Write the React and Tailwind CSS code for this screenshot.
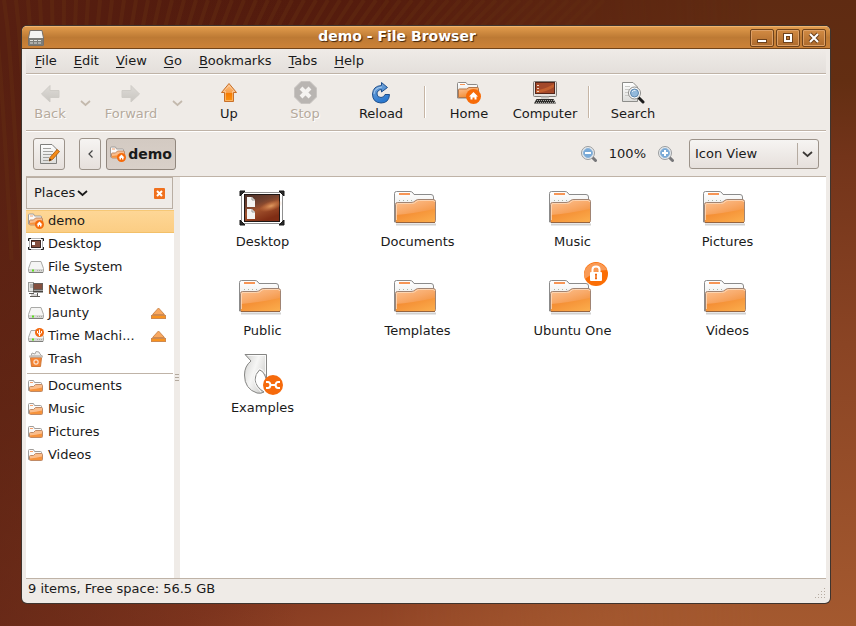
import React from "react";

const STRIPES = Array.from({ length: 52 }, (_, i) => {
  const x = -8 + i * 12;
  const lean = Math.min(26, -4 + i * 0.7);
  return `M${x} 0 L${x - lean} 26 Q${x - lean * 2.4} 70 ${x - lean * 2.4 + 10} 260`;
});

function Wallpaper() {
  return (
    <svg
      className="absolute inset-0 h-full w-full"
      viewBox="0 0 856 626"
      preserveAspectRatio="none"
      aria-hidden="true"
    >
      <defs>
        <linearGradient id="sky" x1="0.2" y1="0" x2="0.7" y2="1">
          <stop offset="0" stopColor="#50190c" />
          <stop offset="0.45" stopColor="#672814" />
          <stop offset="0.8" stopColor="#843820" />
          <stop offset="1" stopColor="#a2552e" />
        </linearGradient>
        <linearGradient id="shade" x1="0" y1="0" x2="1" y2="0">
          <stop offset="0" stopColor="#5c2314" stopOpacity="0.6" />
          <stop offset="0.35" stopColor="#5c2314" stopOpacity="0" />
        </linearGradient>
        <linearGradient id="rightGlow" x1="0" y1="0" x2="0" y2="1">
          <stop offset="0" stopColor="#5f2b12" />
          <stop offset="0.13" stopColor="#632e12" />
          <stop offset="0.25" stopColor="#73341a" />
          <stop offset="0.55" stopColor="#8a4424" />
          <stop offset="1" stopColor="#a4592f" />
        </linearGradient>
        <linearGradient id="fadeIn" x1="0" y1="0" x2="1" y2="0">
          <stop offset="0" stopColor="#000" />
          <stop offset="0.8" stopColor="#fff" />
        </linearGradient>
        <mask id="rightMask">
          <rect x="380" width="476" height="626" fill="url(#fadeIn)" />
        </mask>
        <linearGradient id="paper" x1="0" y1="0" x2="0" y2="1">
          <stop offset="0" stopColor="#ffffff" />
          <stop offset="1" stopColor="#dcdcda" />
        </linearGradient>
        <linearGradient id="folder" x1="0" y1="0" x2="0.5" y2="1">
          <stop offset="0" stopColor="#fcc497" />
          <stop offset="0.5" stopColor="#f8a866" />
          <stop offset="1" stopColor="#f28a2c" />
        </linearGradient>
        <linearGradient id="folderLow" x1="0" y1="0" x2="1" y2="1">
          <stop offset="0" stopColor="#f2822b" />
          <stop offset="1" stopColor="#fbae4d" />
        </linearGradient>
        <linearGradient id="arrow" x1="0" y1="0" x2="0" y2="1">
          <stop offset="0" stopColor="#fbc08a" />
          <stop offset="0.5" stopColor="#f8a04a" />
          <stop offset="0.52" stopColor="#f57900" />
          <stop offset="1" stopColor="#fc9312" />
        </linearGradient>
        <linearGradient id="grayArrow" x1="0" y1="0" x2="0" y2="1">
          <stop offset="0" stopColor="#dddad6" />
          <stop offset="1" stopColor="#c9c6c1" />
        </linearGradient>
        <linearGradient id="blue" x1="0" y1="0" x2="0.4" y2="1">
          <stop offset="0" stopColor="#86b0dc" />
          <stop offset="1" stopColor="#2a78cf" />
        </linearGradient>
        <linearGradient id="nebula" x1="0" y1="0" x2="0.5" y2="1">
          <stop offset="0" stopColor="#4b3029" />
          <stop offset="0.4" stopColor="#74422f" />
          <stop offset="0.6" stopColor="#a2532e" />
          <stop offset="1" stopColor="#7f2d14" />
        </linearGradient>
        <radialGradient id="nebulaGlow">
          <stop offset="0" stopColor="#f0ae6e" stopOpacity="0.8" />
          <stop offset="1" stopColor="#d8814a" stopOpacity="0" />
        </radialGradient>
        <linearGradient id="curl" x1="0" y1="0" x2="1" y2="0.6">
          <stop offset="0" stopColor="#cfcfcd" />
          <stop offset="0.5" stopColor="#f6f6f5" />
          <stop offset="1" stopColor="#cfcfcd" />
        </linearGradient>
      </defs>
      <rect width="856" height="626" fill="url(#sky)" />
      <rect width="856" height="626" fill="url(#shade)" />
      <g fill="none" stroke="#642e12" strokeWidth="4" opacity="0.45">
        {STRIPES.map((d) => (
          <path key={d} d={d} />
        ))}
      </g>
      <rect x="380" width="476" height="626" fill="url(#rightGlow)" mask="url(#rightMask)" />
    </svg>
  );
}

function Icon({ size = 24, className = "", children, box = size }) {
  return (
    <svg
      width={size}
      height={size}
      viewBox={`0 0 ${box} ${box}`}
      className={`shrink-0 ${className}`}
      aria-hidden="true"
    >
      {children}
    </svg>
  );
}

function FolderLarge() {
  return (
    <g transform="translate(-1 0)">
      <path d="M3 41.500H43" stroke="#000" strokeOpacity="0.18" strokeWidth="2" />
      <path
        d="M1.500 39V10.500Q1.500 8.500 3.500 8.500H17Q19 8.500 20 10L21 11.500H38Q40.500 11.500 40.500 14V39Z"
        fill="url(#paper)"
        stroke="#8b8b8b"
      />
      <path d="M6 11H17" stroke="#f79555" strokeWidth="2" />
      <path d="M6 17.500H22" stroke="#a7b3a6" strokeDasharray="1 3" />
      <path
        d="M2.500 38V21.500Q2.500 19.500 4.500 19.500H18Q20.500 19.500 22 18L22.500 17.500Q24 16.500 26 16.500H40Q42.500 16.500 42.500 18.500V37.500Q42.500 39.500 40.500 39.500H4Q2.500 39.500 2.500 38Z"
        fill="url(#folder)"
        stroke="#a08473"
      />
      <path d="M3 32Q18 31 42 26V38Q42 39 40.500 39H4Q3 39 3 38Z" fill="url(#folderLow)" />
      <path d="M3.500 37V22Q3.500 20.500 5 20.500H18.500Q21.500 20.500 23 19L24 18Q25 17.500 26.500 17.500H40Q41.500 17.500 41.500 19" fill="none" stroke="#fddcbe" strokeOpacity="0.8" />
      <path d="M3 39.500H42" stroke="#96643f" />
    </g>
  );
}

function FolderSmall() {
  return (
    <g>
      <path d="M.5 12.500V3.500Q.5 2.500 1.500 2.500H5.500L6.500 4.500H12.500Q13.500 4.500 13.500 5.500V12.500Z" fill="#fbfaf9" stroke="#a09d9a" />
      <path d="M2 4.500H5" stroke="#f7a06a" />
      <path d="M1.500 12V9.500Q1.500 8.500 2.500 8.500H5.500L7.500 6.500H13.500Q14.500 6.500 14.500 7.500V12.500Q14.500 13.500 13.500 13.500H2.500Q1.500 13.500 1.500 12.500Z" fill="#fabd8b" stroke="#bf8a66" />
      <path d="M2 11.500Q8 11 14 9.500V13H2Z" fill="#f6933c" />
    </g>
  );
}

function HomeSmall() {
  return (
    <g>
      <g transform="translate(0 -1.500)">
        <FolderSmall />
      </g>
      <circle cx="11.500" cy="11.500" r="4.500" fill="#f66a0a" />
      <path d="M11.500 8.500L14.500 11.500H13.500V13.500H9.500V11.500H8.500Z" fill="#fff" />
      <rect x="11" y="12" width="1" height="2" fill="#f66a0a" />
    </g>
  );
}

function DriveSmall() {
  return (
    <g>
      <path d="M3 2.500H13L15.500 9.500V12.500Q15.500 13.500 14.500 13.500H1.500Q.5 13.500 .5 12.500V9.500Z" fill="#f5f5f4" stroke="#a9a9a6" />
      <path d="M1 10H15V13H1Z" fill="#d6d6d3" />
      <path d="M1 13.500H15" stroke="#7f7f7c" />
      <path d="M4 11.500H6" stroke="#5be01a" strokeWidth="2" />
      <path d="M9 11.500H14" stroke="#aaaaa7" strokeDasharray="1 1" />
    </g>
  );
}

function DesktopSmall() {
  return (
    <g>
      <rect x="1.500" y="2.500" width="13" height="11" fill="#fff" stroke="#b4b4b4" />
      <rect x="3.500" y="4.500" width="9" height="7" fill="#85503f" stroke="#3a2723" />
      <rect x="4" y="6" width="3" height="3" fill="#fff" />
      <path d="M.5 5V2.500H3M15.500 5V2.500H13M.5 11V13.500H3M15.500 11V13.500H13" fill="none" stroke="#1e1e1e" />
    </g>
  );
}

function NetworkSmall() {
  return (
    <g>
      <rect x=".5" y=".5" width="5" height="9" fill="#e4e4e1" stroke="#9b9b98" />
      <path d="M2 3H5M2 5H5" stroke="#8b8b88" />
      <rect x="5.500" y="1.500" width="9" height="6" fill="#84503f" stroke="#66605c" />
      <path d="M5 9.500H15" stroke="#494642" strokeWidth="2" />
      <path d="M1 11.500H6M9.500 11V14M2 14.500H12" stroke="#5f5c58" />
      <path d="M3 13H9" stroke="#a5a29e" />
    </g>
  );
}

function UsbDriveSmall() {
  return (
    <g>
      <DriveSmall />
      <circle cx="11.500" cy="4.500" r="4.500" fill="#f2690f" />
      <path d="M11.500 1.500V8M9.500 3V5L11.500 6.500L13.500 5V3" fill="none" stroke="#fff" />
    </g>
  );
}

function TrashSmall() {
  return (
    <g>
      <path d="M3 5L4 2L7 3L8 .5L11 1L12 3L14 5Z" fill="#f0efed" stroke="#aaa7a4" />
      <path d="M2.500 6.500H13.500L12.500 15.500H3.500Z" fill="#f58433" stroke="#cf7838" />
      <path d="M1 5.500H15" stroke="#c5c1bc" strokeWidth="2" />
      <rect x="6" y="9" width="4" height="4" rx="1" fill="none" stroke="#fff" />
    </g>
  );
}

const MENUS = ["File", "Edit", "View", "Go", "Bookmarks", "Tabs", "Help"];

function MenuBar() {
  return (
    <nav className="flex h-[25px] shrink-0 items-center gap-[17px] border-b border-[#bfb3a7] bg-linear-to-b from-[#efebe7] to-[#e4dfdb] px-[9px]">
      {MENUS.map((m) => (
        <button key={m} type="button">
          <span className="underline decoration-1 underline-offset-2">{m[0]}</span>
          {m.slice(1)}
        </button>
      ))}
    </nav>
  );
}

function ToolButton({ label, width = "w-[76px]", disabled = false, children }) {
  return (
    <button
      type="button"
      disabled={disabled}
      className={`flex shrink-0 flex-col items-center ${width} ${disabled ? "text-[#b5aa9d] [text-shadow:1px_1px_0_#fff]" : ""}`}
    >
      <Icon size={24}>{children}</Icon>
      <span className="leading-[18px]">{label}</span>
    </button>
  );
}

function Chevron({ className = "" }) {
  return (
    <svg width="11" height="7" viewBox="0 0 11 7" className={className} aria-hidden="true">
      <path d="M1 1L5.500 5L10 1" fill="none" stroke="currentColor" strokeWidth="1.700" />
    </svg>
  );
}

function HistoryButton({ label }) {
  return (
    <button type="button" disabled aria-label={label} className="flex w-[22px] justify-center pt-1 text-[#c3b9ad]">
      <Chevron />
    </button>
  );
}

const Separator = () => <div className="mx-[5px] h-8 w-0.5 border-r border-l border-l-[#c6b5a5] border-r-white" />;

function Toolbar() {
  return (
    <div className="flex h-[57px] shrink-0 items-center border-t border-b border-t-white border-b-[#bfb3a7] pb-0.5">
      <ToolButton label="Back" width="w-12" disabled>
        <path d="M12 4.500V9.500H21V16.500H12V21L3.500 13Z" fill="url(#grayArrow)" stroke="#cfccc7" />
      </ToolButton>
      <HistoryButton label="Back history" />
      <ToolButton label="Forward" width="w-[70px]" disabled>
        <path d="M12 4.500V9.500H3V16.500H12V21L20.500 13Z" fill="url(#grayArrow)" stroke="#cfccc7" />
      </ToolButton>
      <HistoryButton label="Forward history" />
      <div className="ml-[3px] flex items-center">
        <ToolButton label="Up">
          <path d="M12 2.500L19.500 11.500H16.500V20.500H7.500V11.500H4.500Z" fill="url(#arrow)" stroke="#c8702a" />
          <path d="M12 4.500L17.500 10.500H15.500V19.500H8.500V10.500H6.500Z" fill="none" stroke="#fff" strokeOpacity="0.35" />
        </ToolButton>
        <ToolButton label="Stop" disabled>
          <path d="M8 .5H17L23.500 7V16L17 22.500H8L1.500 16V7Z" fill="#b9b5b2" stroke="#c9c5c2" />
          <path d="M8 7L17 16M17 7L8 16" stroke="#f5f3f1" strokeWidth="4" />
        </ToolButton>
        <ToolButton label="Reload">
          <path
            d="M12.500 1.500L18.500 6.500L12.500 11V8.500Q8 9 8 13Q8 16.500 12 16.500Q15 16.500 16 13.500H20.500Q20 22 12 22Q3.500 21.500 3.500 13Q4 5 12.500 4.500Z"
            fill="url(#blue)"
            stroke="#1f4f8c"
          />
          <path d="M5 13Q5 7 13 6" fill="none" stroke="#c4dbf2" strokeOpacity="0.7" />
        </ToolButton>
        <Separator />
        <ToolButton label="Home">
          <path d="M.5 17V2.500Q.5 1.500 1.500 1.500H9L10.500 3.500H19.500Q20.500 3.500 20.500 4.500V17Z" fill="url(#paper)" stroke="#8c8986" />
          <path d="M3 3.500H8" stroke="#f79555" />
          <path d="M1.500 16.500V9Q1.500 8 2.500 8H9.500L12 6.500H20.500Q21.500 6.500 21.500 7.500V16.500Z" fill="url(#folder)" stroke="#b3764b" />
          <circle cx="16.500" cy="15.500" r="7.500" fill="#f76b08" />
          <path d="M16.500 11L21 15.500H19.500V18.500H17.500V16.500H15.500V18.500H13.500V15.500H12Z" fill="#fff" />
        </ToolButton>
        <ToolButton label="Computer">
          <rect x=".5" y=".5" width="23" height="15" rx="1" fill="#e4e2df" stroke="#7e7b77" />
          <rect x="2.500" y="1.500" width="19" height="11" fill="#a4492a" stroke="#54251a" />
          <path d="M3 9Q10 9 21 3V6Q14 11 3 12Z" fill="#c4602f" />
          <path d="M4 4.500H6M4 7.500H6M4 10.500H6" stroke="#f3d5c6" />
          <path d="M8 16.500H16" stroke="#c2c0bc" strokeWidth="2" />
          <path d="M3.500 18H20.500L23 22.500H1Z" fill="#302f2d" />
          <path d="M4 19.500H21M3 21.500H22" stroke="#a9a7a4" strokeDasharray="1 1" />
        </ToolButton>
        <Separator />
        <ToolButton label="Search">
          <path d="M1.500 1.500H12L16.500 6V20.500H1.500Z" fill="url(#paper)" stroke="#8d8d8a" />
          <path d="M4 5.500H9M4 8.500H8M4 11.500H7M4 14.500H8" stroke="#c9c9c6" />
          <path d="M17 16L22 21" stroke="#1d1d1d" strokeWidth="3" strokeLinecap="round" />
          <circle cx="13.500" cy="12" r="6" fill="#fff" stroke="#8a8a88" />
          <circle cx="13.500" cy="12" r="4" fill="#92b9dc" stroke="#5e87ad" />
          <path d="M11 11Q12 9 14.500 9.500" stroke="#e5f0fa" fill="none" />
        </ToolButton>
      </div>
    </div>
  );
}

function ZoomIcon({ plus }) {
  return (
    <Icon size={16}>
      <path d="M11 11L14.500 14.500" stroke="#77777a" strokeWidth="3" strokeLinecap="round" />
      <circle cx="7" cy="7" r="6.500" fill="#e6eaee" stroke="#9a9c9e" />
      <circle cx="7" cy="7" r="4.500" fill="#79a9d6" stroke="#8db4da" />
      <path d={plus ? "M4 7H10M7 4V10" : "M4 7H10"} stroke="#fff" strokeWidth="2" />
    </Icon>
  );
}

const raised = "rounded-[3px] border border-[#9c938a] bg-linear-to-b from-[#f6f4f2] to-[#e6e0dc]";

function LocationBar() {
  return (
    <div className="flex h-[46px] shrink-0 items-center border-t border-b border-t-white border-b-[#bfb3a7] px-[7px]">
      <button type="button" aria-label="Edit location" className={`flex h-8 w-8 items-center justify-center ${raised}`}>
        <Icon size={22}>
          <path d="M2.500 1.500H14L18.500 6V20.500H2.500Z" fill="url(#paper)" stroke="#7f7f7c" />
          <path d="M5 5.500H13M5 8.500H15M5 11.500H14M5 14.500H11M5 17.500H10" stroke="#a2a29f" />
          <path d="M11 18L12 14.500L19 6.500L21.500 8.500L14.500 16.500Z" fill="#f68b16" stroke="#b1651b" />
          <path d="M11 18L11.800 15.500L13.500 17Z" fill="#2c2c2c" />
        </Icon>
      </button>
      <button type="button" aria-label="Scroll path back" className={`ml-3.5 flex h-8 w-[22px] items-center justify-center ${raised}`}>
        <svg width="5" height="8" viewBox="0 0 5 8" aria-hidden="true">
          <path d="M4.500 .5L1 4L4.500 7.500" fill="none" stroke="#444" strokeWidth="1.200" />
        </svg>
      </button>
      <button
        type="button"
        className="ml-[5px] flex h-8 w-[70px] items-center justify-center gap-0.5 rounded-[3px] border border-[#91877e] bg-linear-to-b from-[#d3cac2] to-[#d9d0c9] text-sm font-bold"
      >
        <Icon size={16}>
          <HomeSmall />
        </Icon>
        demo
      </button>
      <div className="ml-auto flex items-center gap-3">
        <button type="button" aria-label="Zoom out">
          <ZoomIcon />
        </button>
        <span>100%</span>
        <button type="button" aria-label="Zoom in">
          <ZoomIcon plus />
        </button>
      </div>
      <div className="relative ml-[15px]">
        <select
          aria-label="View mode"
          defaultValue="icon"
          className={`block h-[30px] w-[130px] appearance-none pr-7 pl-[5px] outline-none ${raised}`}
        >
          <option value="icon">Icon View</option>
          <option value="list">List View</option>
          <option value="compact">Compact View</option>
        </select>
        <div className="pointer-events-none absolute inset-y-1 right-1.5 flex items-center border-l border-[#b5aba1] pl-1 text-[#3b3835]">
          <Chevron />
        </div>
      </div>
    </div>
  );
}

const PLACES = [
  { name: "demo", icon: HomeSmall, active: true },
  { name: "Desktop", icon: DesktopSmall },
  { name: "File System", icon: DriveSmall },
  { name: "Network", icon: NetworkSmall },
  { name: "Jaunty", icon: DriveSmall, eject: true },
  { name: "Time Machi...", icon: UsbDriveSmall, eject: true },
  { name: "Trash", icon: TrashSmall },
];
const BOOKMARKS = ["Documents", "Music", "Pictures", "Videos"].map((name) => ({ name, icon: FolderSmall }));

function PlaceRow({ name, icon: Glyph, active, eject }) {
  return (
    <li
      className={`flex h-[23px] items-center pr-2 pb-px pl-0.5 ${active ? "bg-linear-to-b from-[#fed797] to-[#fbcd83] shadow-[inset_0_1px_0_#f6c876,inset_0_-1px_0_#f3c069]" : ""}`}
    >
      <button type="button" className="flex flex-1 items-center gap-1 text-left whitespace-nowrap">
        <Icon size={16}>
          <Glyph />
        </Icon>
        {name}
      </button>
      {eject && (
        <button type="button" aria-label={`Eject ${name}`}>
          <svg width="15" height="13" viewBox="0 0 15 13" aria-hidden="true">
            <path d="M7.500 1L13.500 7.500H1.500Z" fill="#f9a860" stroke="#cf8a50" />
            <rect x=".5" y="8.500" width="14" height="3" fill="#f9931f" stroke="#cf8a50" />
          </svg>
        </button>
      )}
    </li>
  );
}

function Sidebar() {
  return (
    <aside className="flex w-[148px] shrink-0 flex-col bg-white">
      <div className="bg-[#efebe7] pr-px pb-px">
        <div className="flex h-8 items-center justify-between border border-[#b9aea3] px-[7px]">
          <button type="button" className="flex items-center gap-0.5">
            Places <Chevron />
          </button>
          <button type="button" aria-label="Close side pane">
            <Icon size={11}>
              <rect width="11" height="11" rx="1" fill="#f0701d" />
              <path d="M3 3L8 8M8 3L3 8" stroke="#fff" strokeWidth="2" />
            </Icon>
          </button>
        </div>
      </div>
      <ul>
        {PLACES.map((p) => (
          <PlaceRow key={p.name} {...p} />
        ))}
      </ul>
      <hr className="mx-px mt-[2px] mb-px border-[#bfb3a7]" />
      <ul>
        {BOOKMARKS.map((p) => (
          <PlaceRow key={p.name} {...p} />
        ))}
      </ul>
    </aside>
  );
}

function DesktopLarge() {
  return (
    <g transform="translate(-1 0)">
      <rect x="3.500" y="9.500" width="41" height="31" fill="#fff" stroke="#8f8f8f" />
      <rect x="6.500" y="11.500" width="35" height="27" fill="url(#nebula)" stroke="#1f1715" />
      <ellipse cx="33" cy="23" rx="12" ry="5" fill="url(#nebulaGlow)" transform="rotate(-18 33 23)" />
      <path d="M9 14H14L17 17V24H9ZM9 26H14L17 29V36H9Z" fill="#f4f4f2" />
      <path d="M14 14V17H17M14 26V29H17" fill="none" stroke="#9a9a98" />
      <path d="M2 8H7L2 13ZM46 8H41L46 13ZM2 42H7L2 37ZM46 42H41L46 37Z" fill="#2b2b2b" stroke="#161616" />
    </g>
  );
}

function LinkLarge() {
  return (
    <g>
      <path
        d="M7 5.500H28.500V31Q26 22 21.500 21Q17 25 17 31Q18 38 26 43Q23 45 19 44Q6.500 40 6.500 26Q6.500 17 13 12Z"
        fill="url(#curl)"
        stroke="#858583"
      />
      <path d="M9.500 6.500H27.500V25Q25 20 21.500 19.500Q16 24 16 31Q17 38 23 43" fill="none" stroke="#fff" strokeOpacity="0.8" />
      <circle cx="35" cy="36" r="10" fill="#f66a0c" />
      <path d="M28 33H30Q32 33 32.500 36Q32 39 30 39H28M42 33H40Q38 33 37.500 36Q38 39 40 39H42M32 36H38" fill="none" stroke="#fff" strokeWidth="2" />
    </g>
  );
}

const FILES = [
  { name: "Desktop", icon: DesktopLarge },
  { name: "Documents" },
  { name: "Music" },
  { name: "Pictures" },
  { name: "Public" },
  { name: "Templates" },
  { name: "Ubuntu One", locked: true },
  { name: "Videos" },
  { name: "Examples", icon: LinkLarge },
];

function FileItem({ name, icon: Glyph = FolderLarge, locked }) {
  return (
    <li className={`flex justify-center ${locked ? "pt-3" : ""}`}>
      <button type="button" className="relative flex flex-col items-center">
        <Icon size={48}>
          <Glyph />
        </Icon>
        <span className="leading-[22px]">{name}</span>
        {locked && (
          <Icon size={24} className="absolute -top-2.5 right-1">
            <circle cx="12" cy="12" r="12" fill="#fb6e05" />
            <path d="M0 12A12 12 0 0 1 23 8Q12 8 1 17Q0 15 0 12Z" fill="#f99a55" />
            <path d="M8.500 11V7.500Q8.500 4.500 12 4.500Q15.500 4.500 15.500 7.500V11" fill="none" stroke="#fff" strokeWidth="2" />
            <rect x="6" y="10" width="12" height="9" rx="1" fill="#fff" />
            <path d="M12 12V17M11 12.500H13M11 16.500H13" stroke="#f0670e" strokeWidth="1.500" />
          </Icon>
        )}
      </button>
    </li>
  );
}

function WindowButton({ label, children }) {
  return (
    <button
      type="button"
      aria-label={label}
      className="flex h-[18px] w-6 items-center justify-center rounded-[2px] border border-[#70431b] bg-linear-to-b from-[#d28b43] to-[#ad6a2c] shadow-[inset_0_0_0_1px_#dda066]"
    >
      <svg width="12" height="12" viewBox="0 0 12 12" aria-hidden="true">
        {children}
      </svg>
    </button>
  );
}

function TitleBar() {
  return (
    <header className="flex h-[23px] shrink-0 items-center border-t border-b border-t-[#f0b46f] border-b-[#714319] bg-linear-to-b from-[#e09a4b] via-[#bd7a34] via-50% to-[#cc8238] px-1">
      <Icon size={16} className="ml-0.5">
        <path d="M2 .5H14L15.500 8V15.500H.5V8Z" fill="#f4f4f2" stroke="#77716a" />
        <rect x="1" y="8" width="14" height="7" fill="#7d7d79" />
        <path d="M2 10.500H14M2 13H14" stroke="#e0e0dc" strokeDasharray="3 1" />
      </Icon>
      <h1 className="flex-1 pb-[3px] text-center text-sm leading-[18px] font-bold text-white [text-shadow:1px_1px_1px_#40240c]">
        demo - File Browser
      </h1>
      <div className="flex justify-end gap-0.5">
        <WindowButton label="Minimize">
          <rect x="1.500" y="7.500" width="9" height="3" fill="#fff" stroke="#6e421c" />
        </WindowButton>
        <WindowButton label="Maximize">
          <rect x="3" y="3" width="6" height="6" fill="none" stroke="#6e421c" strokeWidth="4" />
          <rect x="3" y="3" width="6" height="6" fill="none" stroke="#fff" strokeWidth="2" />
        </WindowButton>
        <WindowButton label="Close">
          <path d="M2 2L10 10M10 2L2 10" stroke="#6e421c" strokeWidth="4" />
          <path d="M2 2L10 10M10 2L2 10" stroke="#fff" strokeWidth="2" />
        </WindowButton>
      </div>
    </header>
  );
}

export default function App() {
  return (
    <main className="relative flex min-h-screen overflow-hidden pt-[26px] pr-[26px] pb-[23px] pl-[22px] font-['DejaVu_Sans',sans-serif] text-[13px] text-[#1a1a1a]">
      <Wallpaper />
      <section className="relative flex min-w-0 flex-1 flex-col overflow-hidden rounded-[5px] bg-[#efebe7] shadow-[0_0_0_1px_#3f342e]">
        <TitleBar />
        <div className="flex flex-1 flex-col px-1">
          <MenuBar />
          <Toolbar />
          <LocationBar />
          <div className="flex flex-1">
            <Sidebar />
            <div className="flex w-1.5 shrink-0 flex-col items-center justify-center gap-0.5">
              <i className="h-px w-1 bg-[#b3a99e]" />
              <i className="h-px w-1 bg-[#b3a99e]" />
              <i className="h-px w-1 bg-[#b3a99e]" />
            </div>
            <ul className="grid flex-1 grid-cols-[repeat(auto-fill,155px)] content-start items-end gap-y-[7px] bg-white pt-1.5 pl-[5px]">
              {FILES.map((f) => (
                <FileItem key={f.name} {...f} />
              ))}
            </ul>
          </div>
          <footer className="flex h-[25px] shrink-0 items-start justify-between border-t border-[#bfb3a7] pl-0.5 leading-5">
            <span>9 items, Free space: 56.5 GB</span>
            <Icon size={12} className="mt-2">
              <path d="M10 1.500H12M7 4.500H12M4 7.500H12M1 10.500H12" stroke="#b5aba1" strokeDasharray="1 2" />
            </Icon>
          </footer>
        </div>
      </section>
    </main>
  );
}
